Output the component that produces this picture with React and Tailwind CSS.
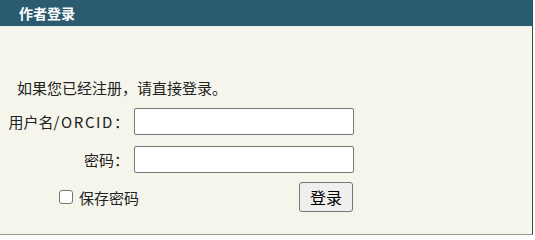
import React from "react";

export default function App() {
  const font = { fontFamily: '"Noto Sans CJK SC", "Microsoft YaHei", sans-serif' };
  return (
    <div className="w-[535px] h-[237px] bg-white" style={font}>
      <div className="w-[533px] h-[235px] flex flex-col bg-[#f5f5ec] border-r border-b border-r-[#2b4a55] border-b-[#9a9a94]">
        <div className="h-[27px] shrink-0 bg-[#2b5b6e] border-b border-[#dff0f0] flex items-center pl-[19px] text-white font-bold text-[14px] leading-none">
          作者登录
        </div>
        <div className="flex flex-col pt-[50px] text-[15px] text-[#222]">
          <p className="pl-[17px] h-[21px] leading-[21px]">如果您已经注册，请直接登录。</p>
          <div className="flex items-center mt-[10px]">
            <span className="w-[129px] text-right leading-none whitespace-nowrap">
              用户名<span className="tracking-[1.6px]">/ORCID</span>：
            </span>
            <input className="ml-[5px] w-[220px] h-[27px] bg-white border border-[#767676] rounded-[2px] outline-none px-1" />
          </div>
          <div className="flex items-center mt-[11px]">
            <span className="w-[129px] text-right leading-none">密码：</span>
            <input type="password" className="ml-[5px] w-[220px] h-[27px] bg-white border border-[#767676] rounded-[2px] outline-none px-1" />
          </div>
          <div className="flex items-center justify-between w-[353px] mt-[9px] pl-[59px]">
            <label className="flex items-center gap-[6px]">
              <input type="checkbox" className="appearance-none w-[14px] h-[14px] border border-[#767676] rounded-[3px] bg-white m-0" />
              <span className="leading-none">保存密码</span>
            </label>
            <button className="w-[54px] h-[30px] bg-[#efefef] border border-[#767676] rounded-[3px] text-[16px] leading-none text-black">
              登录
            </button>
          </div>
        </div>
      </div>
    </div>
  );
}
